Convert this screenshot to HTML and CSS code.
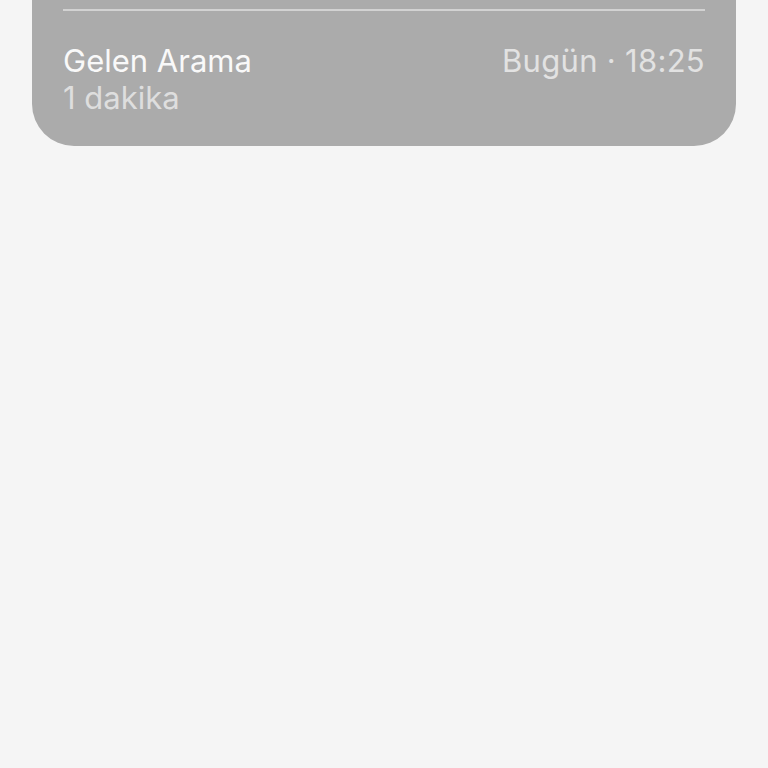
FILE: index.html
```html
<!DOCTYPE html>
<html lang="tr">
  <head>
    <meta charset="UTF-8" />
    <meta name="viewport" content="width=device-width, initial-scale=1.0" />
    <title>Arama Geçmişi</title>
    <link rel="stylesheet" href="styles.css">
  </head>
  <body>
    <div class="call-card">
      <div class="divider"></div>
      <div class="call-row">
        <div class="call-info">
          <div class="call-title">Gelen Arama</div>
          <div class="call-duration">1 dakika</div>
        </div>
        <div class="call-time">Bugün · 18:25</div>
      </div>
    </div>
  </body>
</html>
```

FILE: styles.css
```css
body {
  font-family: Inter, "Noto Sans", sans-serif;
  margin: 0;
  padding: 0;
  background-color: #f5f5f5;
}
.call-card {
  margin: 0 32px;
  padding: 9px 31px 0;
  background-color: #ababab;
  border-radius: 0 0 42px 42px;
  height: 137px;
}
.divider {
  height: 2px;
  background-color: #d2d2d2;
}
.call-row {
  display: flex;
  justify-content: space-between;
  align-items: flex-start;
  padding-top: 31px;
}
.call-title {
  font-size: 31px;
  line-height: 37px;
  color: #f9f9f9;
}
.call-duration {
  font-size: 31px;
  line-height: 37px;
  color: #dedede;
}
.call-time {
  font-size: 31px;
  line-height: 37px;
  letter-spacing: 0.3px;
  color: #e2e2e2;
}
```
